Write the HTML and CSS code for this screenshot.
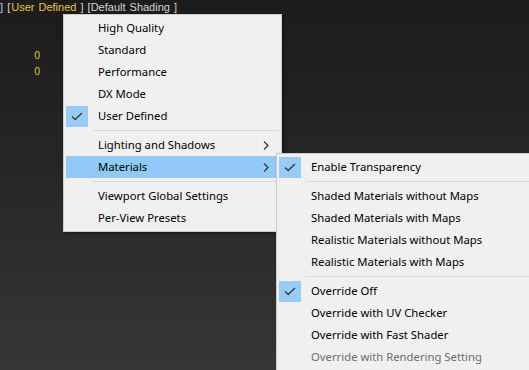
FILE: index.html
```html
<!DOCTYPE html>
<html>
<head>
<meta charset="utf-8">
<link rel="stylesheet" href="styles.css">
</head>
<body>
<div class="viewport">
  <div class="label-line"><span class="br">]</span> <span class="br">[</span><span class="hl">User Defined</span> <span class="br">]</span> <span class="br">[</span>Default Shading <span class="br">]</span></div>
  <div class="stats">
    <div class="stat">0</div>
    <div class="stat">0</div>
  </div>
</div>

<div class="menu main-menu">
  <div class="item"><span class="gut"></span><span class="txt">High Quality</span></div>
  <div class="item"><span class="gut"></span><span class="txt">Standard</span></div>
  <div class="item"><span class="gut"></span><span class="txt">Performance</span></div>
  <div class="item"><span class="gut"></span><span class="txt">DX Mode</span></div>
  <div class="item"><span class="gut checked"><svg width="12" height="9" viewBox="0 0 12 9"><path d="M1 4.5 L4.2 7.5 L11 1" fill="none" stroke="#3a3f45" stroke-width="1.5"/></svg></span><span class="txt">User Defined</span></div>
  <div class="sep"></div>
  <div class="item"><span class="gut"></span><span class="txt">Lighting and Shadows</span><span class="chev"><svg width="6" height="9" viewBox="0 0 6 9"><path d="M1 0.5 L5 4.5 L1 8.5" fill="none" stroke="#333" stroke-width="1.2"/></svg></span></div>
  <div class="item active"><span class="gut"></span><span class="txt">Materials</span><span class="chev"><svg width="6" height="9" viewBox="0 0 6 9"><path d="M1 0.5 L5 4.5 L1 8.5" fill="none" stroke="#333" stroke-width="1.2"/></svg></span></div>
  <div class="sep"></div>
  <div class="item"><span class="gut"></span><span class="txt">Viewport Global Settings</span></div>
  <div class="item"><span class="gut"></span><span class="txt">Per-View Presets</span></div>
</div>

<div class="menu sub-menu">
  <div class="item"><span class="gut checked"><svg width="12" height="9" viewBox="0 0 12 9"><path d="M1 4.5 L4.2 7.5 L11 1" fill="none" stroke="#3a3f45" stroke-width="1.5"/></svg></span><span class="txt">Enable Transparency</span></div>
  <div class="sep"></div>
  <div class="item"><span class="gut"></span><span class="txt">Shaded Materials without Maps</span></div>
  <div class="item"><span class="gut"></span><span class="txt">Shaded Materials with Maps</span></div>
  <div class="item"><span class="gut"></span><span class="txt">Realistic Materials without Maps</span></div>
  <div class="item"><span class="gut"></span><span class="txt">Realistic Materials with Maps</span></div>
  <div class="sep"></div>
  <div class="item"><span class="gut checked"><svg width="12" height="9" viewBox="0 0 12 9"><path d="M1 4.5 L4.2 7.5 L11 1" fill="none" stroke="#3a3f45" stroke-width="1.5"/></svg></span><span class="txt">Override Off</span></div>
  <div class="item"><span class="gut"></span><span class="txt">Override with UV Checker</span></div>
  <div class="item"><span class="gut"></span><span class="txt">Override with Fast Shader</span></div>
  <div class="item disabled"><span class="gut"></span><span class="txt">Override with Rendering Setting</span></div>
</div>
</body>
</html>
```

FILE: styles.css
```css
html, body {
  margin: 0;
  padding: 0;
  width: 529px;
  height: 370px;
  overflow: hidden;
}
body {
  background: linear-gradient(to bottom, #1c1c1c 0px, #252525 150px, #363636 370px);
  font-family: "Noto Sans", "DejaVu Sans", sans-serif;
  position: relative;
}
.label-line {
  font-family: "Liberation Sans", sans-serif;
  font-size: 11px;
  line-height: 14px;
  color: #d4d4d4;
  white-space: nowrap;
  word-spacing: 1px;
  margin-left: 0;
}
.label-line .hl {
  color: #e8c534;
  padding-left: 1px;
}
.stats {
  padding-top: 34px;
  padding-left: 34px;
}
.stat {
  font-family: "DejaVu Sans", sans-serif;
  font-size: 10px;
  line-height: 16px;
  color: #dcc12c;
}
.menu {
  position: absolute;
  background: #f0f0f0;
  border: 1px solid #cccccc;
  padding: 2px;
  font-size: 11.3px;
  color: #000;
  box-sizing: border-box;
}
.main-menu {
  left: 63px;
  top: 14px;
  width: 219px;
  height: 218px;
  box-shadow: 2px 2px 3px rgba(0,0,0,0.35);
}
.sub-menu {
  left: 276px;
  top: 153px;
  width: 262px;
  height: 240px;
  z-index: 2;
  box-shadow: 2px 2px 3px rgba(0,0,0,0.35);
}
.item {
  display: flex;
  align-items: center;
  height: 22px;
}
.txt {
  flex: 1;
  white-space: nowrap;
  line-height: 20px;
  padding-bottom: 1px;
}
.gut {
  width: 22px;
  height: 21px;
  margin-right: 10px;
  display: flex;
  align-items: center;
  justify-content: center;
  flex: none;
}
.gut.checked {
  background: #99cbf7;
}
.chev {
  width: 16px;
  display: flex;
  align-items: center;
  flex: none;
}
.item.active {
  background: #91c9f7;
}
.item.disabled .txt {
  color: #6d6d6d;
}
.sep {
  height: 1px;
  background: #d7d7d7;
  margin: 3px 0 3px 27px;
}
```
